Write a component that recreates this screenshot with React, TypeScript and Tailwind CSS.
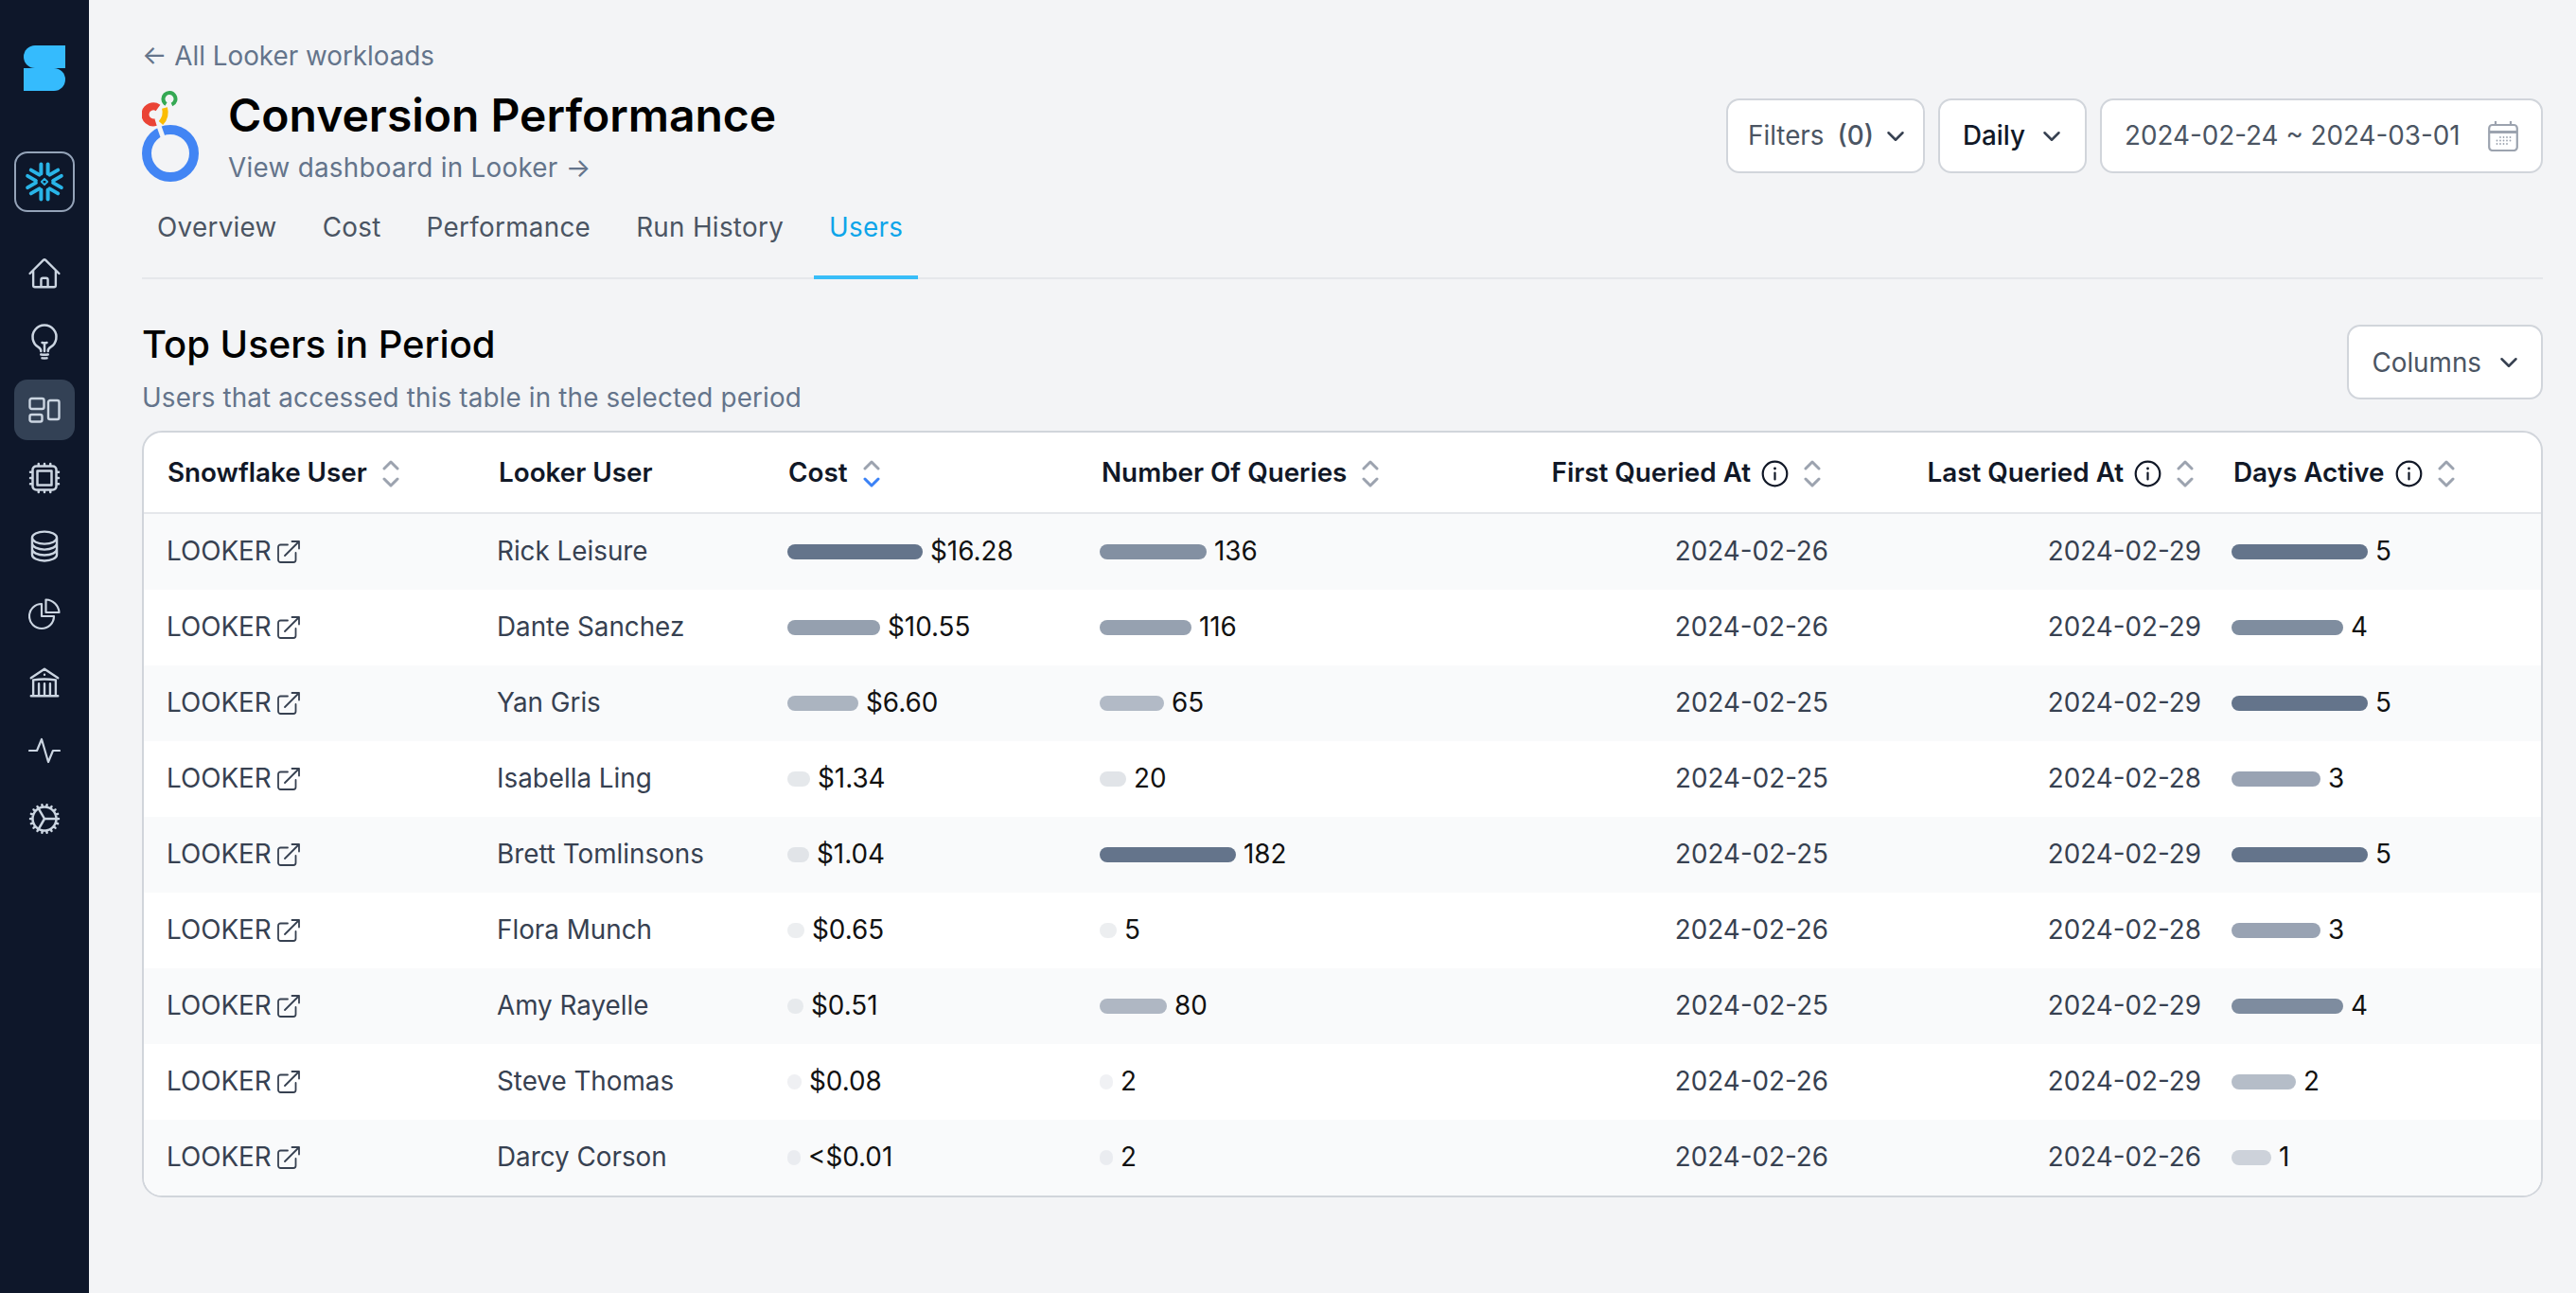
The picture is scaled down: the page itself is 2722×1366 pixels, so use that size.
import { ChevronDown } from "lucide-react";
import {
  HiOutlineBuildingLibrary,
  HiOutlineCircleStack,
  HiOutlineCog,
  HiOutlineCpuChip,
  HiOutlineHome,
  HiOutlineLightBulb,
} from "react-icons/hi2";

const rows = [
  { user: "Rick Leisure", cost: "$16.28", costW: 143, q: "136", qW: 113, first: "2024-02-26", last: "2024-02-29", days: 5 },
  { user: "Dante Sanchez", cost: "$10.55", costW: 98, q: "116", qW: 97, first: "2024-02-26", last: "2024-02-29", days: 4 },
  { user: "Yan Gris", cost: "$6.60", costW: 75, q: "65", qW: 68, first: "2024-02-25", last: "2024-02-29", days: 5 },
  { user: "Isabella Ling", cost: "$1.34", costW: 24, q: "20", qW: 28, first: "2024-02-25", last: "2024-02-28", days: 3 },
  { user: "Brett Tomlinsons", cost: "$1.04", costW: 23, q: "182", qW: 144, first: "2024-02-25", last: "2024-02-29", days: 5 },
  { user: "Flora Munch", cost: "$0.65", costW: 18, q: "5", qW: 18, first: "2024-02-26", last: "2024-02-28", days: 3 },
  { user: "Amy Rayelle", cost: "$0.51", costW: 17, q: "80", qW: 71, first: "2024-02-25", last: "2024-02-29", days: 4 },
  { user: "Steve Thomas", cost: "$0.08", costW: 15, q: "2", qW: 14, first: "2024-02-26", last: "2024-02-29", days: 2 },
  { user: "Darcy Corson", cost: "<$0.01", costW: 14, q: "2", qW: 14, first: "2024-02-26", last: "2024-02-26", days: 1 },
];

const dayWidths = [0, 41, 67, 93, 117, 143];
const tabs = ["Overview", "Cost", "Performance", "Run History", "Users"];
const gridCols = "grid grid-cols-[350px_306px_331px_461px_357px_394px_334px]";

function SLogo() {
  return (
    <svg width="44" height="48" viewBox="0 0 44 48" fill="#35bbfd">
      <path d="M12 0H44V24H12A12 12 0 0 1 12 0Z" />
      <path d="M0 24H32A12 12 0 0 1 32 48H0Z" />
    </svg>
  );
}

function SnowflakeLogo() {
  const angles = [0, 60, 120, 180, 240, 300];
  return (
    <svg width="42" height="42" viewBox="-21 -21 42 42" fill="none" stroke="#29b5e8" strokeWidth="4" strokeLinecap="round">
      {angles.map((a) => (
        <path key={a} transform={`rotate(${a})`} d="M-3.6 -18.5V-8.5M3.6 -18.5V-8.5" />
      ))}
      <path d="M0 -3.2L3.2 0L0 3.2L-3.2 0Z" strokeWidth="1.8" strokeLinejoin="round" />
    </svg>
  );
}

function LookerLogo() {
  return (
    <svg width="63" height="96" viewBox="0 0 63 96" fill="none">
      <circle cx="30" cy="66" r="25" stroke="#4285f4" strokeWidth="10" />
      <path d="M16.5 33L22.5 50" stroke="#f3f4f6" strokeWidth="5" />
      <path d="M17 18A8.5 8.5 0 1 0 14.5 33" stroke="#ea4335" strokeWidth="8" />
      <path d="M24 18Q26.5 27 20 34" stroke="#fbbc04" strokeWidth="6" />
      <path d="M25.5 14A6.5 6.5 0 1 1 31.5 14.5" stroke="#34a853" strokeWidth="4" />
    </svg>
  );
}

function LayoutIcon() {
  return (
    <svg width="34" height="28" viewBox="0 0 34 28" fill="none" stroke="#cbd5e1" strokeWidth="2.4">
      <rect x="1.5" y="2" width="15" height="11" rx="2" />
      <rect x="1.5" y="19" width="13" height="7.5" rx="2" />
      <rect x="21" y="4" width="11.5" height="20" rx="2" />
    </svg>
  );
}

function PieIcon() {
  return (
    <svg width="34" height="34" viewBox="0 0 34 34" fill="none" stroke="#cbd5e1" strokeWidth="2.2" strokeLinejoin="round">
      <path d="M14 6A13 13 0 1 0 27 19H14Z" />
      <path d="M18.5 1.5A14.5 14.5 0 0 1 32.5 15H18.5Z" />
    </svg>
  );
}

function PulseIcon() {
  return (
    <svg width="34" height="28" viewBox="0 0 34 28" fill="none" stroke="#cbd5e1" strokeWidth="2.2" strokeLinecap="round" strokeLinejoin="round">
      <path d="M1 14H9L14 2L21 26L26 14H33" />
    </svg>
  );
}

function SortIcon({ active }: { active?: boolean }) {
  return (
    <svg width="18" height="31" viewBox="0 0 18 31" fill="none" stroke="#9ca3af" strokeWidth="3" strokeLinecap="round" strokeLinejoin="round" className="shrink-0">
      <path d="M2 10L9 3L16 10" />
      <path d="M2 21L9 28L16 21" stroke={active ? "#3b82f6" : "#9ca3af"} />
    </svg>
  );
}

function InfoIcon() {
  return (
    <svg width="29" height="29" viewBox="0 0 29 29" fill="none" stroke="#111827" strokeWidth="2.2" strokeLinecap="round" className="shrink-0">
      <circle cx="14.5" cy="14.5" r="12.8" />
      <path d="M14.5 13.5V20.5" />
      <path d="M14.5 8.8V9" strokeWidth="2.8" />
    </svg>
  );
}

function ExternalIcon() {
  return (
    <svg width="24" height="24" viewBox="0 0 24 24" fill="none" stroke="#374151" strokeWidth="1.8" strokeLinecap="round" strokeLinejoin="round" className="shrink-0">
      <path d="M11 4.5H3.5A2.5 2.5 0 0 0 1 7V20.5A2.5 2.5 0 0 0 3.5 23H17A2.5 2.5 0 0 0 19.5 20.5V13" />
      <path d="M8 16L23 1M15.5 1H23V8.5" />
    </svg>
  );
}

function CalendarIcon() {
  const dots = [
    [13, 18], [16.5, 18], [20, 18], [23.5, 18],
    [9.5, 21.5], [13, 21.5], [16.5, 21.5], [20, 21.5], [23.5, 21.5],
    [9.5, 25], [13, 25], [16.5, 25], [20, 25],
  ];
  return (
    <svg width="32" height="33" viewBox="0 0 32 33" fill="none" stroke="#9ca3af" strokeWidth="2.2" className="shrink-0">
      <rect x="1.2" y="5" width="29.6" height="27" rx="3.5" />
      <path d="M1.2 12.5H30.8" strokeWidth="3" />
      <path d="M8 1V5M24 1V5" />
      {dots.map(([x, y]) => (
        <circle key={`${x}-${y}`} cx={x} cy={y} r="0.9" fill="#9ca3af" stroke="none" />
      ))}
    </svg>
  );
}

function SideItem({ children, active }: { children: React.ReactNode; active?: boolean }) {
  return (
    <div className={`flex h-[64px] w-[64px] items-center justify-center rounded-[14px] ${active ? "bg-[#334155]" : ""}`}>
      {children}
    </div>
  );
}

function Bar({ width, label }: { width: number; label: string | number }) {
  return (
    <div className="flex items-center gap-[8px] text-[#111111]">
      <div className="h-[16px] rounded-[8px] bg-[#64748b]" style={{ width, opacity: width / 143 }} />
      <span>{label}</span>
    </div>
  );
}

function Dropdown({ children, className }: { children: React.ReactNode; className: string }) {
  return (
    <button className={`flex h-[79px] items-center rounded-[14px] border-2 border-[#d1d5db] bg-white text-[27.8px] text-[#4b5563] ${className}`}>
      {children}
      <ChevronDown size={30} strokeWidth={2} className="text-[#374151]" />
    </button>
  );
}

export default function App() {
  return (
    <div className="flex h-screen overflow-hidden bg-[#f3f4f6] text-[27.8px] [font-family:Inter,sans-serif]">
      <aside className="flex w-[94px] shrink-0 flex-col items-center bg-[#0e172a] pt-[48px]">
        <SLogo />
        <div className="mt-[64px] flex h-[64px] w-[64px] items-center justify-center rounded-[14px] border-2 border-[#94a3b8]">
          <SnowflakeLogo />
        </div>
        <div className="mt-[33px] flex flex-col gap-[8px]">
          <SideItem><HiOutlineHome size={38} color="#cbd5e1" /></SideItem>
          <SideItem><HiOutlineLightBulb size={40} color="#cbd5e1" /></SideItem>
          <SideItem active><LayoutIcon /></SideItem>
          <SideItem><HiOutlineCpuChip size={40} color="#cbd5e1" /></SideItem>
          <SideItem><HiOutlineCircleStack size={38} color="#cbd5e1" /></SideItem>
          <SideItem><PieIcon /></SideItem>
          <SideItem><HiOutlineBuildingLibrary size={38} color="#cbd5e1" /></SideItem>
          <SideItem><PulseIcon /></SideItem>
          <SideItem><HiOutlineCog size={40} color="#cbd5e1" /></SideItem>
        </div>
      </aside>

      <main className="min-w-0 flex-1 pl-[56px] pr-[35px] pt-[39px]">
        <div className="h-[40px] leading-[40px] text-[#64748b]">← All Looker workloads</div>

        <div className="mt-[14px] flex items-start justify-between">
          <div className="flex items-start gap-[28px] pt-[3px]">
            <LookerLogo />
            <div className="-mt-[2px]">
              <h1 className="h-[56px] text-[48px] font-semibold leading-[56px] text-black">Conversion Performance</h1>
              <div className="mt-[7px] h-[40px] leading-[40px] tracking-[0.29px] text-[#64748b]">View dashboard in Looker →</div>
            </div>
          </div>
          <div className="mt-[11px] flex gap-[14px]">
            <Dropdown className="gap-[8px] pl-[21px] pr-[14px]">
              <span>Filters</span>
              <span className="ml-[6px] font-medium">(0)</span>
            </Dropdown>
            <Dropdown className="gap-[13px] pl-[24px] pr-[20px]">
              <span className="font-medium text-[#111827]">Daily</span>
            </Dropdown>
            <div className="flex h-[79px] w-[468px] items-center justify-between rounded-[14px] border-2 border-[#d1d5db] bg-white pl-[24px] pr-[24px] text-[#4b5563]">
              <span>2024-02-24 ~ 2024-03-01</span>
              <CalendarIcon />
            </div>
          </div>
        </div>

        <div className="mt-[23px] flex gap-[16px] border-b-2 border-[#e5e7eb]">
          {tabs.map((tab) => (
            <div
              key={tab}
              className={`-mb-[2px] border-b-[4px] px-[16px] pb-[31px] leading-[40px] tracking-[0.3px] ${
                tab === "Users" ? "border-[#38bdf8] text-[#0ea5e9]" : "border-transparent text-[#4b5563]"
              }`}
            >
              {tab}
            </div>
          ))}
        </div>

        <div className="mt-[44px] flex items-start justify-between">
          <div>
            <h2 className="h-[50px] text-[40px] font-[450] leading-[50px] text-black">Top Users in Period</h2>
            <div className="mt-[11px] h-[40px] leading-[40px] tracking-[0.16px] text-[#64748b]">Users that accessed this table in the selected period</div>
          </div>
          <div className="mt-[4px]">
            <Dropdown className="gap-[14px] pl-[24px] pr-[19px]">
              <span className="translate-y-[1px]">Columns</span>
            </Dropdown>
          </div>
        </div>

        <div className="mt-[15px] overflow-hidden rounded-[21px] border-2 border-[#d1d5db] bg-white">
          <div className={`${gridCols} h-[86px] items-center border-b-2 border-[#e5e7eb] pt-[2px] font-semibold text-[#111827]`}>
            <div className="flex items-center gap-[16px] pl-[25px]">Snowflake User <SortIcon /></div>
            <div className="pl-[25px]">Looker User</div>
            <div className="flex items-center gap-[16px] pl-[25px]">Cost <SortIcon active /></div>
            <div className="flex items-center gap-[16px] pl-[25px]">Number Of Queries <SortIcon /></div>
            <div className="flex items-center justify-end gap-[11px] pr-[33px]">
              First Queried At <InfoIcon /><span className="ml-[5px]"><SortIcon /></span>
            </div>
            <div className="flex items-center justify-end gap-[11px] pr-[33px]">
              Last Queried At <InfoIcon /><span className="ml-[5px]"><SortIcon /></span>
            </div>
            <div className="flex items-center gap-[11px] pl-[9px]">
              Days Active <InfoIcon /><span className="ml-[5px]"><SortIcon /></span>
            </div>
          </div>
          {rows.map((row, i) => (
            <div key={row.user} className={`${gridCols} h-[80px] items-center text-[#374151] ${i % 2 === 0 ? "bg-[#f9fafb]" : "bg-white"}`}>
              <div className="flex items-center gap-[6px] pl-[24px]">LOOKER <ExternalIcon /></div>
              <div className="pl-[23px]">{row.user}</div>
              <div className="pl-[24px]"><Bar width={row.costW} label={row.cost} /></div>
              <div className="pl-[23px]"><Bar width={row.qW} label={row.q} /></div>
              <div className="pr-[25px] text-right">{row.first}</div>
              <div className="pr-[25px] text-right">{row.last}</div>
              <div className="pl-[7px]"><Bar width={dayWidths[row.days] + 1} label={row.days} /></div>
            </div>
          ))}
        </div>
      </main>
    </div>
  );
}
